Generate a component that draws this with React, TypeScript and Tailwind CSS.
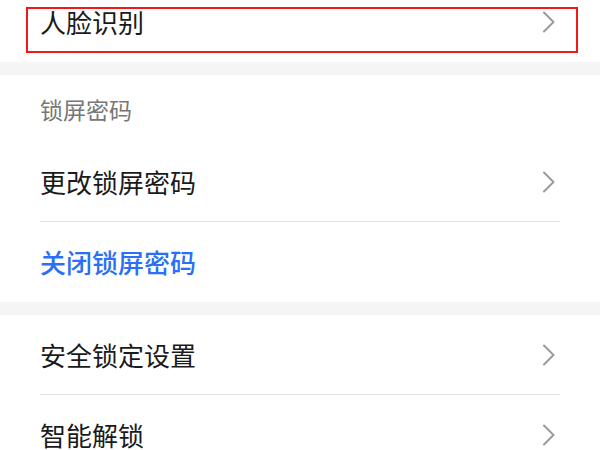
import React from "react";

const Chevron = () => (
  <svg width="14" height="22" viewBox="0 0 14 22" className="shrink-0">
    <polyline points="2,1.5 11.5,11 2,20.5" fill="none" stroke="#9a9a9a" strokeWidth="2" strokeLinecap="round" strokeLinejoin="round" />
  </svg>
);

const Row = ({ label, blue = false, chevron = true, divider = false }: { label: string; blue?: boolean; chevron?: boolean; divider?: boolean }) => (
  <div className="relative h-[80px] flex items-center justify-between pl-[40px] pr-[44px]">
    <span className={`text-[26px] leading-none ${blue ? "text-[#2a6ff5] font-medium" : "text-[#1a1a1a]"}`}>{label}</span>
    {chevron && <Chevron />}
    {divider && <div className="absolute left-[40px] right-[40px] bottom-0 h-px bg-[#e3e3e3]" />}
  </div>
);

export default function App() {
  return (
    <div
      className="relative w-[600px] h-[450px] overflow-hidden bg-white"
      style={{ fontFamily: '"Noto Sans CJK SC", "Noto Sans", sans-serif' }}
    >
      <div className="-mt-[18px]">
        <Row label="人脸识别" />
        <div className="h-[13px] bg-[#f5f5f5]" />
        <div className="h-[67px] flex items-center pl-[40px] pt-[2px]">
          <span className="text-[23px] leading-none text-[#777777]">锁屏密码</span>
        </div>
        <Row label="更改锁屏密码" divider />
        <Row label="关闭锁屏密码" blue chevron={false} />
        <div className="h-[13px] bg-[#f5f5f5]" />
        <Row label="安全锁定设置" divider />
        <Row label="智能解锁" />
      </div>
      <div className="absolute left-[26px] top-[7px] w-[552px] h-[46px] border-2 border-[#f01818] pointer-events-none" />
    </div>
  );
}
